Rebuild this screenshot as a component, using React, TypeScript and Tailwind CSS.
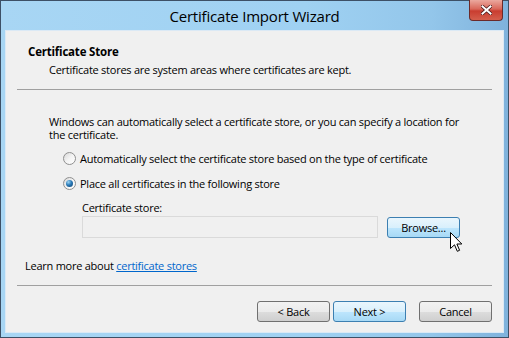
import React from "react";

function Radio({ checked }: { checked?: boolean }) {
  return (
    <span className="w-[13px] h-[13px] rounded-full border border-[#8f8f8f] bg-gradient-to-br from-[#d8d8d8] via-[#f4f4f4] to-[#ffffff] flex items-center justify-center shrink-0">
      {checked && (
        <span className="w-[7px] h-[7px] rounded-full bg-[radial-gradient(circle_at_35%_30%,#9fd7f5_0%,#2a7ab8_45%,#0e3f6c_100%)]" />
      )}
    </span>
  );
}

function Button({
  label,
  blue,
  className,
}: {
  label: string;
  blue?: boolean;
  className?: string;
}) {
  return (
    <div
      className={
        "w-[73px] h-[21px] rounded-[3px] border flex items-center justify-center text-[11px] tracking-[-0.25px] text-black " +
        (blue
          ? "border-[#3c7fb1] bg-[linear-gradient(#eaf6fd_0%,#d9f0fc_50%,#bee6fd_51%,#a7d9f5_100%)] "
          : "border-[#707070] bg-[linear-gradient(#f2f2f2_0%,#ebebeb_50%,#dddddd_51%,#cfcfcf_100%)] ") +
        (className ?? "")
      }
    >
      {label}
    </div>
  );
}

export default function App() {
  return (
    <div
      className="w-[509px] h-[338px] relative overflow-hidden bg-white"
      style={{ fontFamily: '"Open Sans", "Noto Sans", sans-serif' }}
    >
      <div className="w-full h-full border border-[#3d5066] bg-[linear-gradient(90deg,#a8d6f4_0%,#9fd1f2_60%,#93c6ea_85%,#7fb2dc_100%)] flex flex-col">
        {/* title bar */}
        <div className="h-[29px] flex items-center justify-center shrink-0">
          <span className="text-[15px] text-black tracking-[-0.2px] leading-none mt-[1px]">
            Certificate Import Wizard
          </span>
        </div>
        <div className="absolute top-0 right-[6px] w-[34px] h-[21px] rounded-b-[4px] border border-t-0 border-[#6b2a2a] bg-[linear-gradient(#eba89e_0%,#d9675a_45%,#c93d30_55%,#d45e4c_100%)] flex items-center justify-center">
          <svg width="11" height="10" viewBox="0 0 11 10">
            <path
              d="M1.5 1.5 L9.5 8.5 M9.5 1.5 L1.5 8.5"
              stroke="#4a1a1a"
              strokeWidth="3.6"
              strokeLinecap="square"
            />
            <path
              d="M1.5 1.5 L9.5 8.5 M9.5 1.5 L1.5 8.5"
              stroke="#ffffff"
              strokeWidth="2"
              strokeLinecap="square"
            />
          </svg>
        </div>

        {/* content */}
        <div className="flex-1 mx-[4px] mb-[4px] bg-[#f0f0f0] border border-[#dbe9f5] flex flex-col text-[11px] tracking-[-0.25px] text-black leading-[15px]">
          <div className="pl-[22px] pt-[13px] font-bold text-[11.5px] tracking-[-0.2px]">
            Certificate Store
          </div>
          <div className="pl-[43px] pt-[3px]">
            Certificate stores are system areas where certificates are kept.
          </div>
          <div className="mx-[11px] mt-[12px] h-px bg-[#a0a0a0]" />

          <div className="pl-[43px] pr-[40px] pt-[25px] leading-[13px]">
            Windows can automatically select a certificate store, or you can
            specify a location for the certificate.
          </div>

          <div className="pl-[57px] pt-[10px] flex flex-col gap-[10px]">
            <div className="flex items-center gap-[4px] h-[15px]">
              <Radio />
              <span>
                Automatically select the certificate store based on the type of
                certificate
              </span>
            </div>
            <div className="flex items-center gap-[4px] h-[15px]">
              <Radio checked />
              <span>Place all certificates in the following store</span>
            </div>
          </div>

          <div className="pl-[76px] pt-[9px]">Certificate store:</div>
          <div className="pl-[76px] pt-[1px] flex items-center gap-[9px]">
            <div className="w-[296px] h-[22px] border border-[#dadada] bg-[#f0f0f0]" />
            <Button label="Browse..." blue />
          </div>

          <div className="pl-[19px] pt-[20px]">
            Learn more about{" "}
            <span className="text-[#0066cc] underline">certificate stores</span>
          </div>

          <div className="mx-[11px] mt-[12px] h-px bg-[#a0a0a0]" />

          <div className="flex justify-end pr-[11px] pt-[15px]">
            <Button label="< Back" />
            <Button label="Next >" blue className="ml-[3px]" />
            <Button label="Cancel" className="ml-[13px]" />
          </div>
        </div>
      </div>

      {/* mouse cursor */}
      <svg
        className="absolute left-[450px] top-[232px]"
        width="13"
        height="21"
        viewBox="0 0 13 21"
      >
        <path
          d="M0.5 0.5 L0.5 16.5 L4.5 12.8 L7.3 19.3 L9.6 18.3 L6.9 12 L11.8 12 Z"
          fill="#ffffff"
          stroke="#000000"
          strokeWidth="1"
          strokeLinejoin="round"
        />
      </svg>
    </div>
  );
}
